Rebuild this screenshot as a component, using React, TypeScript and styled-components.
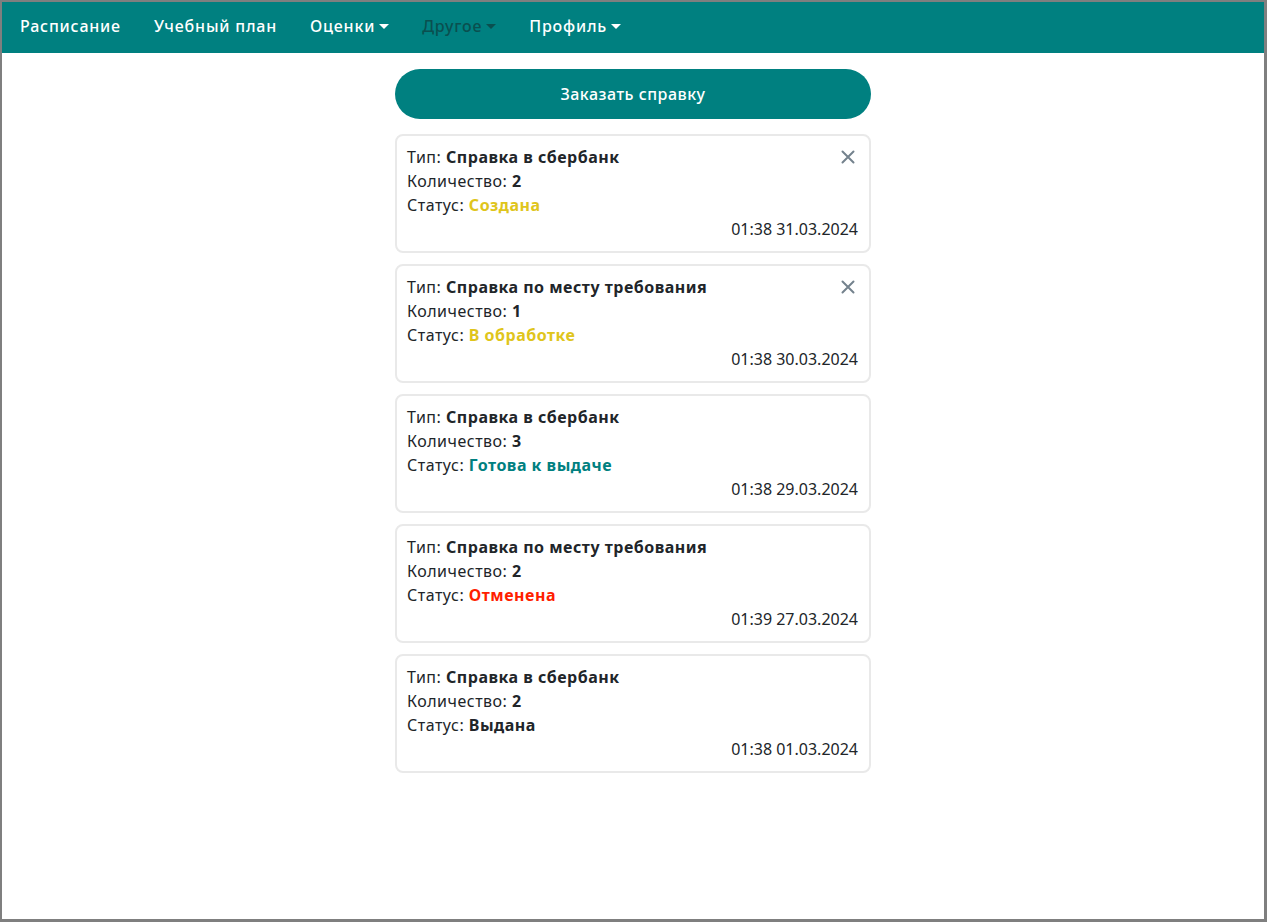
import * as React from "react";
import styled, { createGlobalStyle } from "styled-components";

type Status = "created" | "processing" | "ready" | "cancelled" | "issued";

type Request = {
  type: string;
  count: number;
  status: Status;
  date: string;
  canCancel: boolean;
};

const requests: Request[] = [
  { type: "Справка в сбербанк", count: 2, status: "created", date: "01:38 31.03.2024", canCancel: true },
  { type: "Справка по месту требования", count: 1, status: "processing", date: "01:38 30.03.2024", canCancel: true },
  { type: "Справка в сбербанк", count: 3, status: "ready", date: "01:38 29.03.2024", canCancel: false },
  { type: "Справка по месту требования", count: 2, status: "cancelled", date: "01:39 27.03.2024", canCancel: false },
  { type: "Справка в сбербанк", count: 2, status: "issued", date: "01:38 01.03.2024", canCancel: false },
];

const statusLabel: Record<Status, string> = {
  created: "Создана",
  processing: "В обработке",
  ready: "Готова к выдаче",
  cancelled: "Отменена",
  issued: "Выдана",
};

const statusColor: Record<Status, string> = {
  created: "#dfc51c",
  processing: "#dfc51c",
  ready: "#008080",
  cancelled: "#ff1e00",
  issued: "#212529",
};

const GlobalStyle = createGlobalStyle`
  * {
    box-sizing: border-box;
  }
  html, body {
    margin: 0;
    padding: 0;
    background: #ffffff;
  }
  body {
    font-family: "Noto Sans", "Open Sans", sans-serif;
    color: #212529;
  }
`;

const Frame = styled.div`
  height: 922px;
  border-style: solid;
  border-color: #7f7f7f;
  border-width: 2px 3px 3px 2px;
  background: #fff;
`;

const Navbar = styled.nav`
  display: flex;
  align-items: center;
  gap: 33px;
  height: 51px;
  padding: 0 18px 3px;
  background: #008080;
`;

const NavItem = styled.span<{ $disabled?: boolean }>`
  display: flex;
  align-items: center;
  font-size: 16px;
  font-weight: 500;
  letter-spacing: 0.8px;
  color: ${(p) => (p.$disabled ? "#0a4f4f" : "#ffffff")};
  white-space: nowrap;
`;

const Caret = styled.span`
  display: inline-block;
  margin-left: 4px;
  margin-top: 1px;
  width: 0;
  height: 0;
  border-left: 5px solid transparent;
  border-right: 5px solid transparent;
  border-top: 5px solid currentColor;
`;

const Main = styled.main`
  width: 476px;
  margin: 16px auto 0;
  display: flex;
  flex-direction: column;
`;

const OrderButton = styled.button`
  height: 50px;
  border: none;
  border-radius: 25px;
  background: #008080;
  color: #fff;
  font-family: inherit;
  font-size: 16px;
  font-weight: 500;
  letter-spacing: 0.5px;
  cursor: pointer;
  margin-bottom: 15px;
`;

const List = styled.div`
  display: flex;
  flex-direction: column;
  gap: 11px;
`;

const Card = styled.div`
  position: relative;
  border: 2px solid #e9e9e9;
  border-radius: 8px;
  padding: 9px 11px 10px 10px;
  font-size: 16px;
  line-height: 24px;
  letter-spacing: 0.5px;
`;

const Line = styled.div``;

const Value = styled.b<{ $color?: string }>`
  font-weight: 700;
  color: ${(p) => p.$color ?? "#212529"};
`;

const DateLine = styled.div`
  text-align: right;
  letter-spacing: 0;
`;

const CloseButton = styled.button`
  position: absolute;
  top: 13px;
  right: 13px;
  width: 16px;
  height: 16px;
  padding: 0;
  border: none;
  background: none;
  color: #74828d;
  cursor: pointer;
  display: flex;
  align-items: center;
  justify-content: center;
`;

const CloseIcon = () => (
  <svg width="14" height="14" viewBox="0 0 14 14" fill="none">
    <path d="M1.5 1.5L12.5 12.5M12.5 1.5L1.5 12.5" stroke="currentColor" strokeWidth="2" strokeLinecap="round" />
  </svg>
);

const RequestCard = ({ item }: { item: Request }) => (
  <Card>
    {item.canCancel && (
      <CloseButton aria-label="Отменить">
        <CloseIcon />
      </CloseButton>
    )}
    <Line>
      Тип: <Value>{item.type}</Value>
    </Line>
    <Line>
      Количество: <Value>{item.count}</Value>
    </Line>
    <Line>
      Статус: <Value $color={statusColor[item.status]}>{statusLabel[item.status]}</Value>
    </Line>
    <DateLine>{item.date}</DateLine>
  </Card>
);

const App = () => {
  return (
    <Frame>
      <GlobalStyle />
      <Navbar>
        <NavItem>Расписание</NavItem>
        <NavItem>Учебный план</NavItem>
        <NavItem>
          Оценки
          <Caret />
        </NavItem>
        <NavItem $disabled>
          Другое
          <Caret />
        </NavItem>
        <NavItem>
          Профиль
          <Caret />
        </NavItem>
      </Navbar>
      <Main>
        <OrderButton>Заказать справку</OrderButton>
        <List>
          {requests.map((r, i) => (
            <RequestCard key={i} item={r} />
          ))}
        </List>
      </Main>
    </Frame>
  );
};

export default App;
